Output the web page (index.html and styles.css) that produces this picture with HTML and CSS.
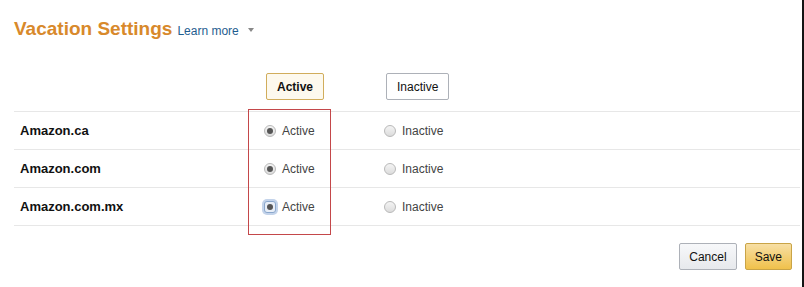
FILE: index.html
```html
<!DOCTYPE html>
<html lang="en">

<head>
    <title>Vacation Settings</title>
    <meta charset="utf-8">
    <meta name="viewport" content="width=device-width, initial-scale=1">
    <link rel="stylesheet" href="styles.css">
</head>

<body>
    <div class="page">
        <div class="title">
            <h1>Vacation Settings</h1>
            <a class="learn" href="#">Learn more</a>
            <span class="caret"></span>
        </div>

        <div class="settings">
            <div class="row head">
                <div class="cell label"></div>
                <div class="cell active"><button class="btn btn-active">Active</button></div>
                <div class="cell inactive"><button class="btn">Inactive</button></div>
            </div>
            <div class="row">
                <div class="cell label">Amazon.ca</div>
                <div class="cell active"><span class="radio checked"></span>Active</div>
                <div class="cell inactive"><span class="radio"></span>Inactive</div>
            </div>
            <div class="row">
                <div class="cell label">Amazon.com</div>
                <div class="cell active"><span class="radio checked"></span>Active</div>
                <div class="cell inactive"><span class="radio"></span>Inactive</div>
            </div>
            <div class="row">
                <div class="cell label">Amazon.com.mx</div>
                <div class="cell active"><span class="radio checked focus"></span>Active</div>
                <div class="cell inactive"><span class="radio"></span>Inactive</div>
            </div>
        </div>

        <div class="footer">
            <button class="btn btn-cancel">Cancel</button>
            <button class="btn btn-save">Save</button>
        </div>

        <!-- highlight box drawn over the active column -->
        <div class="highlight"></div>
    </div>
</body>

</html>
```

FILE: styles.css
```css
* {
    margin: 0;
    padding: 0;
    box-sizing: border-box;
}

body {
    margin: 0;
    background-color: #fff;
    color: #111;
    font-family: "Liberation Sans", Arial, sans-serif;
}

.page {
    position: relative;
    min-height: 100vh;
    padding: 0 2px 0 14px;
    border-right: 2px solid #141414;
    width: 804px;
}

.title {
    display: flex;
    align-items: baseline;
    padding-top: 17px;
    height: 40px;
}

h1 {
    font-size: 19px;
    line-height: 24px;
    color: #d8892b;
    font-weight: bold;
}

.learn {
    margin-left: 5px;
    font-size: 12px;
    color: #1f5d8f;
    text-decoration: none;
}

.caret {
    display: inline-block;
    margin-left: 9px;
    width: 0;
    height: 0;
    border-left: 3px solid transparent;
    border-right: 3px solid transparent;
    border-top: 4px solid #888;
    transform: translateY(-3px);
}

/* Settings table */
.row {
    display: grid;
    grid-template-columns: 234px 120px 1fr;
    height: 38px;
    border-bottom: 1px solid #e7e7e7;
    align-items: center;
}

.row.head {
    height: 72px;
    align-items: start;
    padding-top: 33px;
}

.cell {
    display: flex;
    align-items: center;
    font-size: 12px;
    color: #444;
}

.cell.label {
    padding-left: 6px;
    font-size: 13px;
    font-weight: bold;
    color: #111;
}

.cell.active {
    padding-left: 16px;
}

.cell.inactive {
    padding-left: 16px;
}

.row.head .cell.active,
.row.head .cell.inactive {
    padding-left: 18px;
}

.radio {
    position: relative;
    display: inline-block;
    width: 12px;
    height: 12px;
    margin-right: 6px;
    border-radius: 50%;
    border: 1px solid #b9b9b9;
    background: linear-gradient(#f4f4f4, #dcdcdc);
}

.radio.checked::after {
    content: "";
    position: absolute;
    left: 2px;
    top: 2px;
    width: 6px;
    height: 6px;
    border-radius: 50%;
    background-color: #555;
}

.radio.focus {
    box-shadow: 0 0 0 2px #c3d3ea;
    border-radius: 3px;
    border-color: #8aa7cc;
    background: #e8eef7;
}

/* Buttons */
.btn {
    height: 27px;
    padding: 0 10px;
    font-family: inherit;
    font-size: 12px;
    color: #111;
    background: #fff;
    border: 1px solid #adb1b8;
    border-radius: 2px;
}

.btn-active {
    font-weight: bold;
    border-color: #d1ad5c;
    background: #fdf9ee;
}

.footer {
    display: flex;
    justify-content: flex-end;
    gap: 8px;
    padding: 17px 8px 0 0;
}

.btn-cancel {
    padding: 0 9px;
    background: linear-gradient(#f7f8fa, #e7e9ec);
}

.btn-save {
    padding: 0 9px;
    border-color: #c9a447;
    background: linear-gradient(#f7dfa5, #f0c14b);
}

.highlight {
    position: absolute;
    left: 248px;
    top: 109px;
    width: 83px;
    height: 126px;
    border: 1px solid #c4474a;
}
```
